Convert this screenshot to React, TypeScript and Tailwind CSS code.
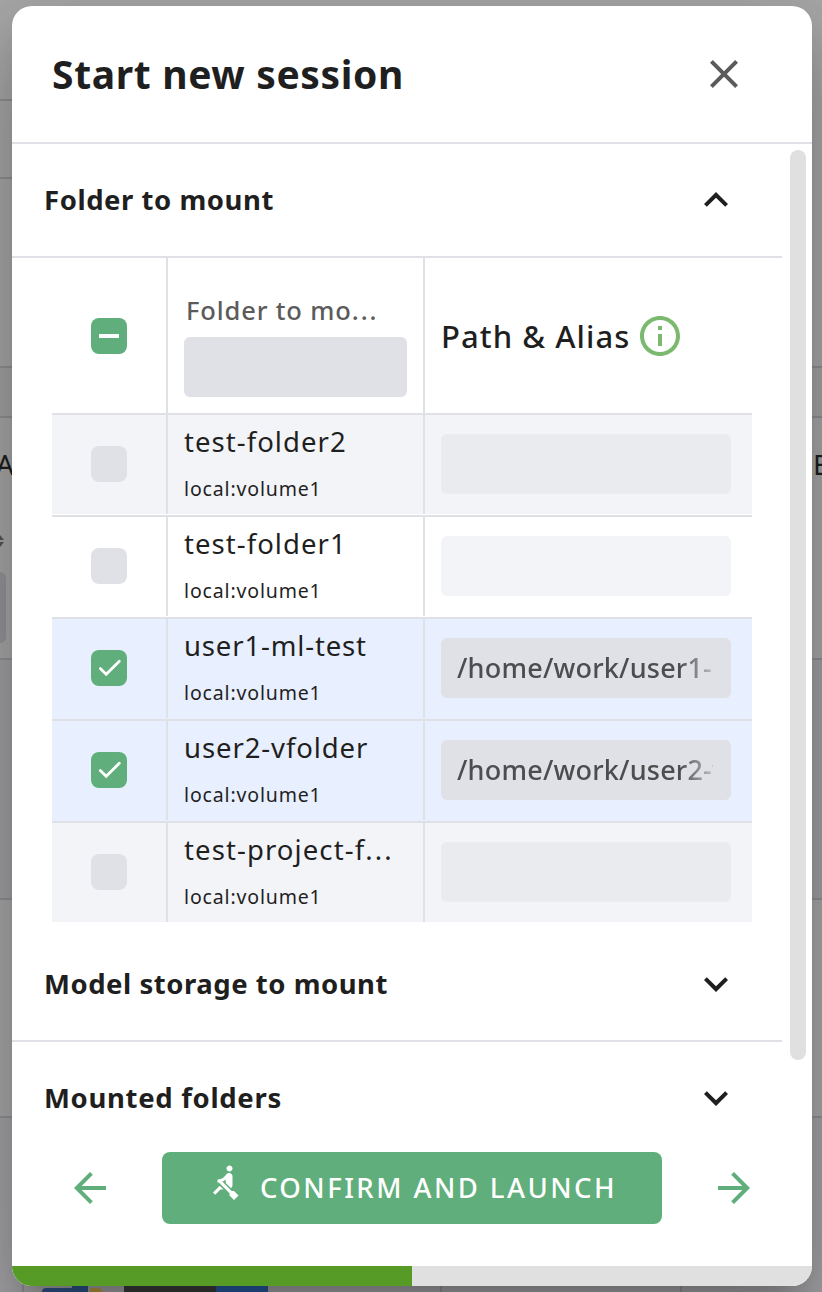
import { MdRowing, MdClose, MdArrowBack, MdArrowForward, MdKeyboardArrowUp, MdKeyboardArrowDown, MdInfoOutline } from "react-icons/md";

type Folder = { name: string; truncated?: boolean; tracking: string; bg: string; checked?: boolean; path?: string; field: string };

const folders: Folder[] = [
  { name: "test-folder2", tracking: "tracking-[1.05px]", bg: "bg-[#f3f4f7]", field: "bg-[#eaebef]" },
  { name: "test-folder1", tracking: "tracking-[1.05px]", bg: "bg-white", field: "bg-[#f3f4f7]" },
  { name: "user1-ml-test", tracking: "tracking-[0.85px]", bg: "bg-[#e8effe]", checked: true, path: "/home/work/user1-ml-test", field: "bg-[#dfe1e6]" },
  { name: "user2-vfolder", tracking: "tracking-[0.9px]", bg: "bg-[#e8effe]", checked: true, path: "/home/work/user2-vfolder", field: "bg-[#dfe1e6]" },
  { name: "test-project-f", truncated: true, tracking: "tracking-[1.1px]", bg: "bg-[#f3f4f7]", field: "bg-[#eaebef]" },
];

function Checkbox({ state }: { state: "on" | "off" | "mixed" }) {
  return (
    <span className={`flex size-9 items-center justify-center rounded-lg ${state === "off" ? "bg-[#dfe1e6]" : "bg-[#5fae7b]"}`}>
      {state === "mixed" && <span className="h-1 w-5 bg-white" />}
      {state === "on" && (
        <svg viewBox="0 0 36 36" className="size-9" fill="none" stroke="white" strokeWidth="2.8" strokeLinecap="round">
          <path d="M9.3 18.5l5.9 5.7L28.3 11.2" />
        </svg>
      )}
    </span>
  );
}

function FolderRow({ folder, last }: { folder: Folder; last: boolean }) {
  return (
    <div className={last ? "h-[99px] bg-[#f3f4f7]" : `h-[102px] border-b-2 border-[#dfe1e6] ${folder.checked ? "bg-[#e8effe]" : "bg-white"}`}>
      <div className={`flex h-[99px] ${folder.bg}`}>
        <div className="flex w-[116px] items-center justify-center border-r-2 border-[#dfe1e6] pb-0.5">
          <Checkbox state={folder.checked ? "on" : "off"} />
        </div>
        <div className="w-[257px] border-r-2 border-[#dfe1e6] pl-4">
          <div className={`pt-2 text-[27.5px] leading-[38px] whitespace-nowrap ${folder.tracking}`}>
            {folder.name}
            {folder.truncated && <span className="tracking-[2.1px]">...</span>}
          </div>
          <div className="pt-[15px] text-[19.5px] leading-[26px] tracking-[0.85px]">local:volume1</div>
        </div>
        <div className="flex flex-1 items-center pb-0.5 pl-4">
          <div className={`flex h-[60px] w-[290px] items-center rounded-md px-4 ${folder.field}`}>
            <div className="w-[256px] overflow-hidden [mask-image:linear-gradient(to_right,black_87%,transparent_104%)] pt-0.5 text-[27px] font-medium tracking-[0.2px] whitespace-nowrap text-[#4c4d4f]">
              {folder.path}
            </div>
          </div>
        </div>
      </div>
    </div>
  );
}

function Section({ title, tracking, open }: { title: string; tracking: string; open?: boolean }) {
  const Icon = open ? MdKeyboardArrowUp : MdKeyboardArrowDown;
  return (
    <div className="flex h-28 items-center justify-between pr-[42px] pl-8">
      <h2 className={`text-[27.5px] font-bold ${tracking}`}>{title}</h2>
      <Icon className="size-12" />
    </div>
  );
}

function Backdrop() {
  return (
    <div className="absolute inset-0 bg-[#a8a8a8] text-[28px]">
      <div className="h-[101px] w-1/2 border-b-2 border-[#909095]" />
      <div className="h-[78px] w-1/2 border-b-2 border-[#909095]" />
      <div className="h-[189px] border-b-2 border-[#909095]" />
      <div className="h-[50px] border-b-2 border-[#909095] bg-[#a4a4a4]" />
      <div className="flex h-[242px] justify-between overflow-hidden border-b-2 border-[#909095]">
        <div className="flex flex-col">
          <span className="-ml-[4px] pt-[26px] leading-10">A</span>
          <svg viewBox="0 0 4 14" className="mt-[50px] h-[14px] w-1" fill="#555">
            <path d="M0 1l4 5H0zM0 8h4L0 13z" />
          </svg>
          <span className="mt-6 h-[71px] w-[6px] rounded-r-md bg-[#95969b]" />
        </div>
        <span className="w-[9px] pt-[26px] leading-10">E</span>
      </div>
      <div className="h-[240px] border-b-2 border-[#909095] bg-[#a2a2a5]" />
      <div className="h-[218px] border-b-2 border-[#909095]" />
      <div className="flex h-[174px] items-end bg-[#a4a4a7] pl-[22px]">
        <div className="h-2.5 w-5 border-l-2 border-[#909095]" />
        <div className="h-1 w-[30px] rounded-tl bg-[#30558a]" />
        <div className="h-2.5 w-4 bg-[#30558a]" />
        <div className="ml-0.5 h-1 w-3 rounded-tr bg-[#b99a40]" />
        <div className="ml-[22px] h-[10px] w-[92px] bg-[#3b3b3d]" />
        <div className="h-[10px] w-[52px] bg-[#2859a0]" />
        <div className="ml-[172px] h-[10px] w-[242px] border-x-2 border-[#909095]" />
      </div>
    </div>
  );
}

export default function App() {
  return (
    <div className="relative h-[1292px] w-[822px] overflow-hidden font-['Noto_Sans','Open_Sans',sans-serif] text-[#1f1f1f]">
      <Backdrop />
      <div className="relative mt-1.5 ml-3 flex h-[1280px] w-[800px] flex-col overflow-hidden rounded-[20px] bg-white shadow-[0_22px_30px_-14px_rgba(0,0,0,0.2),0_48px_76px_6px_rgba(0,0,0,0.14),0_18px_92px_16px_rgba(0,0,0,0.12)]">
        <header className="flex h-[138px] shrink-0 items-center justify-between border-b-2 border-[#dfe1e6] pr-16 pl-10">
          <h1 className="text-[39px] font-bold tracking-[0.65px]">Start new session</h1>
          <MdClose className="size-12 text-[#5b5b5b]" />
        </header>
        <div className="flex h-[1008px] shrink-0 overflow-hidden">
          <main className="w-[770px]">
            <Section title="Folder to mount" tracking="tracking-[0.55px]" open />
            <div className="border-t-2 border-[#dfe1e6] px-10">
              <div className="w-[700px]">
                <div className="flex h-[157px] border-b-2 border-[#dfe1e6]">
                  <div className="flex w-[116px] items-center justify-center border-r-2 border-[#dfe1e6]">
                    <Checkbox state="mixed" />
                  </div>
                  <div className="w-[257px] border-r-2 border-[#dfe1e6] pt-[34px] pl-4">
                    <div className="pl-0.5 text-[25.5px] leading-9 font-medium tracking-[0.85px] text-[#5b5b5b]">
                      Folder to mo<span className="tracking-[2px]">...</span>
                    </div>
                    <div className="mt-[9px] h-[60px] w-[223px] rounded-md bg-[#dfe1e6]" />
                  </div>
                  <div className="flex flex-1 items-center pl-4">
                    <span className="pt-0.5 text-[31px] font-medium tracking-[1.05px] whitespace-nowrap">Path &amp; Alias</span>
                    <MdInfoOutline className="ml-1.5 size-12 text-[#7bb96f]" />
                  </div>
                </div>
                {folders.map((f, i) => (
                  <FolderRow key={f.name} folder={f} last={i === folders.length - 1} />
                ))}
              </div>
            </div>
            <div className="pt-[6px]">
              <Section title="Model storage to mount" tracking="tracking-[0.53px]" />
            </div>
            <div className="border-t-2 border-[#dfe1e6]">
              <Section title="Mounted folders" tracking="tracking-[0.68px]" />
            </div>
          </main>
          <div className="mt-1.5 ml-2 h-[910px] w-4 rounded-full bg-[#e0e0e0]" />
        </div>
        <footer className="flex h-[72px] shrink-0 items-center justify-between px-[54px]">
          <MdArrowBack className="size-12 text-[#5fae7b]" />
          <button className="flex h-[72px] w-[500px] items-center rounded-lg bg-[#5fae7b] pl-[45px] text-white">
            <MdRowing className="mb-3 size-9" />
            <span className="ml-[17px] text-[27.5px] font-medium tracking-[2.45px] whitespace-nowrap">CONFIRM AND LAUNCH</span>
          </button>
          <MdArrowForward className="size-12 text-[#5fae7b]" />
        </footer>
        <div className="mt-auto h-5 shrink-0 bg-[#e0e0e0]">
          <div className="h-5 w-1/2 bg-[#579b27]" />
        </div>
      </div>
    </div>
  );
}
